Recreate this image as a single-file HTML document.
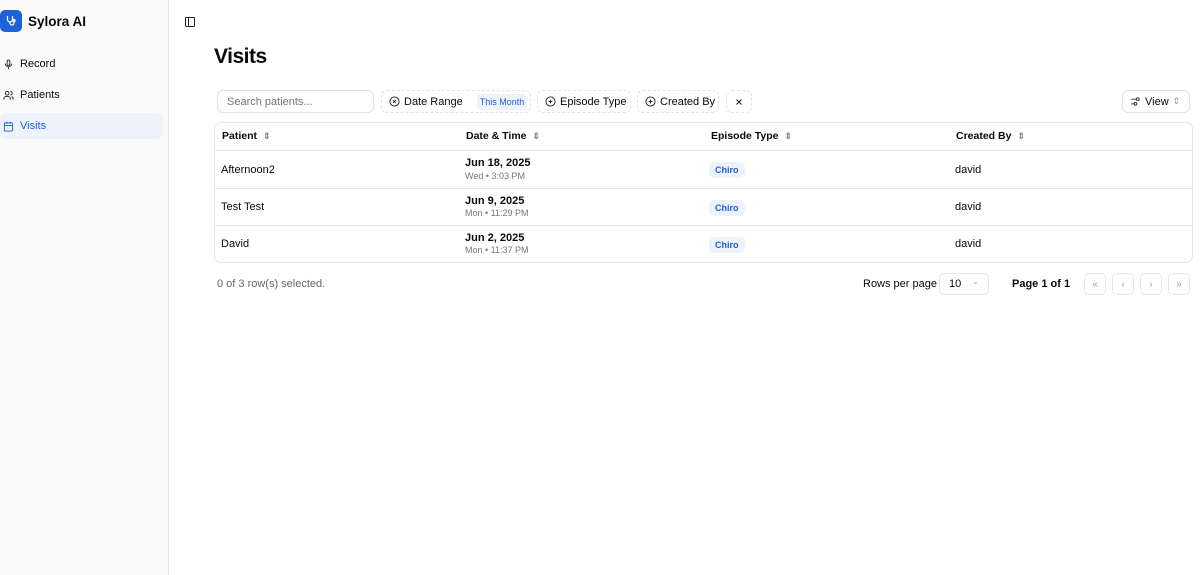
<!DOCTYPE html>
<html><head><style>
*{box-sizing:border-box;margin:0;padding:0}
body{width:1200px;height:575px;font-family:"Liberation Sans",sans-serif;color:#0a0a0a;background:#fff;position:relative;overflow:hidden;font-size:11px;white-space:nowrap}
.abs{position:absolute}
.side{left:0;top:0;width:169px;height:575px;background:#fafafa;border-right:1px solid #e8e8e8}
.nav{position:absolute;left:0;width:163px;height:26px;display:flex;align-items:center;padding-left:3px;font-size:11px;gap:6px}
.btn{position:absolute;top:90px;height:23px;border:1px dashed #e2e2e2;border-radius:6px;display:flex;align-items:center;font-size:11px;gap:4px;padding:0 7px;white-space:nowrap}
.th{position:absolute;top:130px;font-weight:bold;font-size:10.5px;display:flex;gap:6px;align-items:center}
.row{position:absolute;left:215px;width:977px;border-top:1px solid #e8e8e8}
.cell{position:absolute;font-size:11px}
.chip{position:absolute;background:#eef3fb;color:#1d5fd0;font-weight:bold;font-size:9px;padding:3px 6px;border-radius:5px}
.pg{position:absolute;top:273px;width:22px;height:22px;border:1px solid #e8e8e8;border-radius:5px;color:#999;font-size:10px;display:flex;align-items:center;justify-content:center}
svg{flex:none}
</style></head><body>
<div class="abs side"></div>
<div class="abs" style="left:0;top:10px;width:22px;height:22px;background:#1d63d8;border-radius:5px;display:flex;align-items:center;justify-content:center">
<svg width="12" height="12" viewBox="0 0 24 24" fill="none" stroke="#fff" stroke-width="2.5" stroke-linecap="round"><path d="M5 3v6a5 5 0 0 0 10 0V3M10 14v2a4 4 0 0 0 8 0v-3"/><circle cx="18" cy="11" r="2"/></svg></div>
<div class="abs" style="left:28px;top:14px;font-size:13.5px;font-weight:bold">Sylora AI</div>
<div class="nav" style="top:51px"><svg width="11" height="11" viewBox="0 0 24 24" fill="none" stroke="#222" stroke-width="2"><rect x="9" y="2" width="6" height="12" rx="3"/><path d="M5 10a7 7 0 0 0 14 0M12 17v5"/></svg>Record</div>
<div class="nav" style="top:82px"><svg width="11" height="11" viewBox="0 0 24 24" fill="none" stroke="#222" stroke-width="2"><circle cx="9" cy="7" r="4"/><path d="M2 21v-2a5 5 0 0 1 5-5h4a5 5 0 0 1 5 5v2M16 3a4 4 0 0 1 0 8M22 21v-2a5 5 0 0 0-3-4.5"/></svg>Patients</div>
<div class="nav" style="top:113px;background:#eef3fb;border-radius:6px;color:#1d5fd0"><svg width="11" height="11" viewBox="0 0 24 24" fill="none" stroke="#1d5fd0" stroke-width="2"><rect x="3" y="4" width="18" height="18" rx="2"/><path d="M3 10h18M8 2v4M16 2v4"/></svg>Visits</div>
<svg class="abs" style="left:184px;top:16px" width="12" height="12" viewBox="0 0 24 24" fill="none" stroke="#222" stroke-width="2"><rect x="3" y="3" width="18" height="18" rx="2"/><path d="M9 3v18"/></svg>
<div class="abs" style="left:214px;top:45px;font-size:21px;font-weight:bold;letter-spacing:-0.5px">Visits</div>
<div class="abs" style="left:217px;top:90px;width:157px;height:23px;border:1px solid #e2e2e2;border-radius:6px;padding:5px 9px;color:#777;font-size:11px">Search patients...</div>
<div class="btn" style="left:381px;width:150px"><svg width="11" height="11" viewBox="0 0 24 24" fill="none" stroke="#222" stroke-width="2"><circle cx="12" cy="12" r="10"/><path d="M9 9l6 6M15 9l-6 6"/></svg>Date Range<span style="width:1px;height:14px;background:#e2e2e2;margin:0 3px"></span><span style="background:#eef3fb;color:#1d5fd0;font-size:9px;padding:3px 3px;border-radius:4px">This Month</span></div>
<div class="btn" style="left:537px;width:94px"><svg width="11" height="11" viewBox="0 0 24 24" fill="none" stroke="#222" stroke-width="2"><circle cx="12" cy="12" r="10"/><path d="M12 8v8M8 12h8"/></svg>Episode Type</div>
<div class="btn" style="left:637px;width:82px"><svg width="11" height="11" viewBox="0 0 24 24" fill="none" stroke="#222" stroke-width="2"><circle cx="12" cy="12" r="10"/><path d="M12 8v8M8 12h8"/></svg>Created By</div>
<div class="btn" style="left:726px;width:26px;justify-content:center;padding:0"><svg width="10" height="10" viewBox="0 0 24 24" fill="none" stroke="#222" stroke-width="2.5"><path d="M6 6l12 12M18 6L6 18"/></svg></div>
<div class="btn" style="left:1122px;width:68px;border-style:solid"><svg width="11" height="11" viewBox="0 0 24 24" fill="none" stroke="#222" stroke-width="2"><path d="M3 7h11M3 17h5"/><circle cx="17" cy="7" r="3"/><circle cx="12" cy="17" r="3"/></svg>View<span style="color:#999;font-size:9px">⇕</span></div>
<div class="abs" style="left:214px;top:122px;width:979px;height:141px;border:1px solid #e6e6e6;border-radius:7px"></div>
<div class="th" style="left:222px">Patient <span style="color:#888;font-size:9px">⇕</span></div>
<div class="th" style="left:466px">Date &amp; Time <span style="color:#888;font-size:9px">⇕</span></div>
<div class="th" style="left:711px">Episode Type <span style="color:#888;font-size:9px">⇕</span></div>
<div class="th" style="left:956px">Created By <span style="color:#888;font-size:9px">⇕</span></div>
<div class="row" style="top:150px"></div><div class="row" style="top:188px"></div><div class="row" style="top:225px"></div>
<div class="cell" style="left:221px;top:164px">Afternoon2</div>
<div class="cell" style="left:465px;top:157px;font-weight:bold">Jun 18, 2025</div><div class="cell" style="left:465px;top:171px;font-size:9px;color:#777">Wed • 3:03 PM</div>
<div class="chip" style="left:709px;top:162px">Chiro</div><div class="cell" style="left:955px;top:164px">david</div>
<div class="cell" style="left:221px;top:201px">Test Test</div>
<div class="cell" style="left:465px;top:195px;font-weight:bold">Jun 9, 2025</div><div class="cell" style="left:465px;top:208px;font-size:9px;color:#777">Mon • 11:29 PM</div>
<div class="chip" style="left:709px;top:200px">Chiro</div><div class="cell" style="left:955px;top:201px">david</div>
<div class="cell" style="left:221px;top:238px">David</div>
<div class="cell" style="left:465px;top:232px;font-weight:bold">Jun 2, 2025</div><div class="cell" style="left:465px;top:245px;font-size:9px;color:#777">Mon • 11:37 PM</div>
<div class="chip" style="left:709px;top:237px">Chiro</div><div class="cell" style="left:955px;top:238px">david</div>
<div class="cell" style="left:217px;top:278px;color:#666">0 of 3 row(s) selected.</div>
<div class="cell" style="left:863px;top:278px">Rows per page</div>
<div class="abs" style="left:939px;top:273px;width:50px;height:22px;border:1px solid #e6e6e6;border-radius:5px;padding:4px 9px;font-size:11px">10<span style="position:absolute;left:32px;top:3px;color:#aaa;font-size:8px">⌄</span></div>
<div class="cell" style="left:1012px;top:278px;font-weight:bold">Page 1 of 1</div>
<div class="pg" style="left:1084px">«</div><div class="pg" style="left:1112px">‹</div><div class="pg" style="left:1140px">›</div><div class="pg" style="left:1168px">»</div>
</body></html>
